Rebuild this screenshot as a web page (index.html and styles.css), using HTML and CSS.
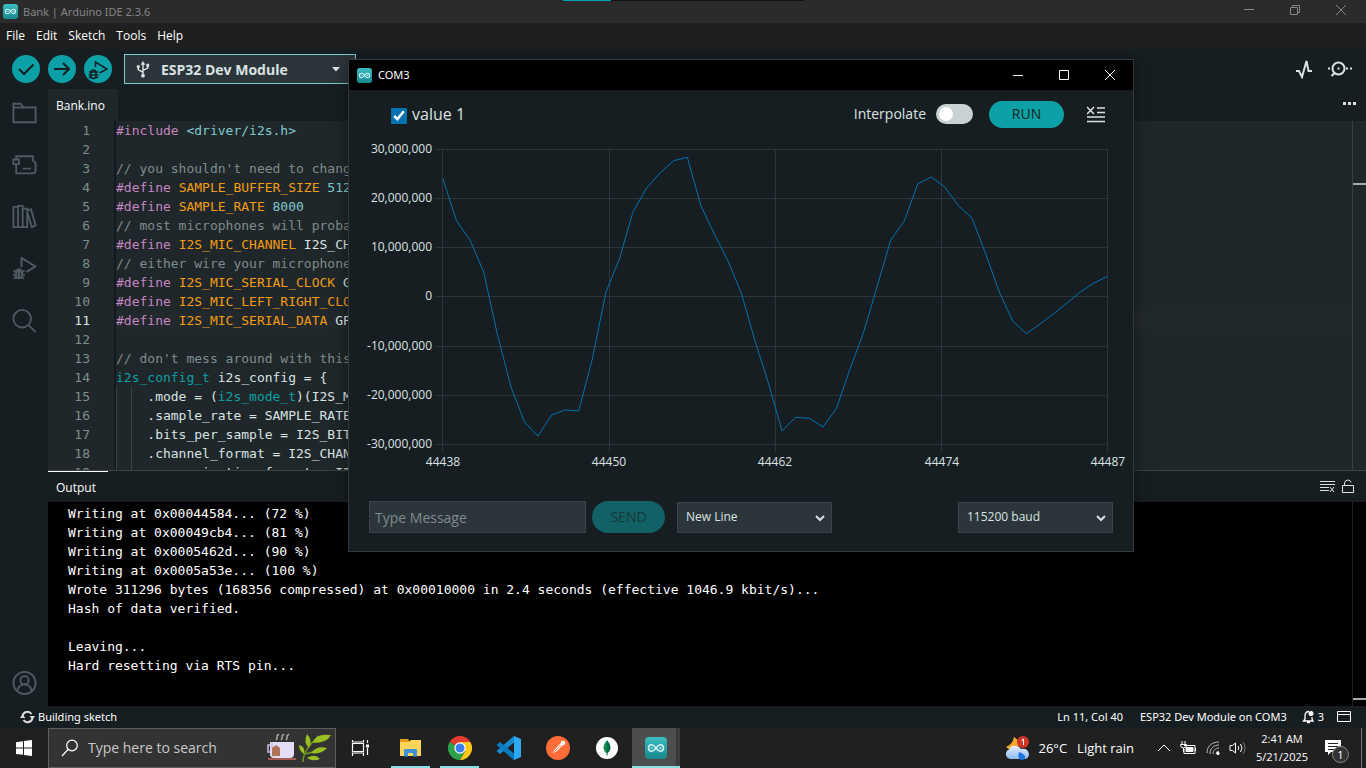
FILE: index.html
```html
<!DOCTYPE html>
<html lang="en">
<head>
<meta charset="utf-8">
<title>Bank | Arduino IDE 2.3.6</title>
<link rel="stylesheet" href="styles.css">
</head>
<body>
<svg class="defs" aria-hidden="true">
  <defs>
    <linearGradient id="teal" x1="0" y1="0" x2="0" y2="1"><stop offset="0" stop-color="#3dbdc0"/><stop offset="1" stop-color="#15898f"/></linearGradient>
    <linearGradient id="cloud" x1="0" y1="0" x2="0" y2="1"><stop offset="0" stop-color="#e8f1ff"/><stop offset="1" stop-color="#8fb9f2"/></linearGradient>
    <symbol id="arduino" viewBox="0 0 22 22">
      <rect width="22" height="22" rx="4" fill="url(#teal)"/>
      <path d="M11 11C9.500 8.800 8.300 7.800 6.700 7.800a3.200 3.200 0 0 0 0 6.400C8.300 14.200 9.500 13.200 11 11s2.700-3.200 4.300-3.200a3.200 3.200 0 0 1 0 6.400C13.700 14.200 12.500 13.200 11 11Z" fill="none" stroke="#d5f3f2" stroke-width="1.500"/>
      <path d="M5.500 11h2.400M14.100 11h2.400M15.300 9.800v2.400" stroke="#d5f3f2" stroke-width=".8"/>
    </symbol>
    <symbol id="bugplay" viewBox="0 0 24 24">
      <path d="M9 10V1l14 8.500-9 5.300" />
      <path d="M3.700 14.500h5.600v4a2.800 2.800 0 0 1-5.600 0ZM4.300 14.500c0-3 4.400-3 4.400 0M6.500 14.500v6M3.700 15.500 1 13.500M3.700 17.700H.5M4 19.500l-2.500 2.300M9.300 15.500l2.700-2M9.300 17.700h3M9 19.500l2.500 2.300"/>
    </symbol>
  </defs>
</svg>
<div class="desktop">
  <header class="titlebar">
    <svg class="app-icon"><use href="#arduino"/></svg>
    <span class="title">Bank | Arduino IDE 2.3.6</span>
    <div class="win-controls">
      <button aria-label="Minimize"><svg width="12" height="12"><path d="M1 5.500h10"/></svg></button>
      <button aria-label="Restore"><svg width="12" height="12"><path d="M1.500 3.500h7v7h-7zM3.500 3V1.500h7v7H9"/></svg></button>
      <button aria-label="Close"><svg width="12" height="12"><path d="m1 1 10 10M11 1 1 11"/></svg></button>
    </div>
    <div class="loading-strip"></div>
  </header>
  <nav class="menubar">
    <a href="#file">File</a><a href="#edit">Edit</a><a href="#sketch">Sketch</a><a href="#tools">Tools</a><a href="#help">Help</a>
  </nav>
  <div class="toolbar">
    <button class="round" aria-label="Verify"><svg viewBox="0 0 28 28"><path d="m7 14 5 5L21.500 9.500"/></svg></button>
    <button class="round" aria-label="Upload"><svg viewBox="0 0 28 28"><path d="M6 14h15M15 8l6 6-6 6"/></svg></button>
    <button class="round debug" aria-label="Debug"><svg viewBox="0 0 28 28"><path d="M11.500 12V7L23 14l-7.500 4"/><path d="M7 17h5v4a2.500 2.500 0 0 1-5 0ZM7.500 17c0-2.700 4-2.700 4 0M5 16.500l2 1.500M4.500 20H7M5 23l2-1.300M14 16.500 12 18M14.500 20H12M14 23l-2-1.300M7 20h5"/></svg></button>
    <div class="board">
      <svg class="usb" viewBox="0 0 16 18"><path d="M8 15V3M8 12 3 9V6.500M8 10l5-2.500V5"/><path class="solid" d="m8 0 2.500 4h-5ZM1.500 4.500h3v3h-3zM11.500 3h3v3h-3z"/><circle class="solid" cx="8" cy="15.500" r="2"/></svg>
      <select aria-label="Board"><option>ESP32 Dev Module</option></select>
      <svg class="caret" viewBox="0 0 10 6"><path d="M0 0h10L5 5.500Z"/></svg>
    </div>
    <div class="tool-right">
      <button aria-label="Serial plotter"><svg width="18" height="20" viewBox="0 0 18 20"><path d="M1 12h3l3 6L11.500 2l2 10H17" stroke-width="2"/></svg></button>
      <button aria-label="Serial monitor"><svg width="26" height="18" viewBox="0 0 26 18"><circle cx="11.500" cy="8.500" r="6" stroke-width="2"/><path d="m7.500 13-3 3" stroke-width="2"/><path d="M1 8.500h2M10.500 8.500h2M19 8.500h2M23 8.500h2" stroke-width="2"/></svg></button>
    </div>
  </div>
  <main class="workspace">
    <aside class="activity">
      <button aria-label="Sketchbook"><svg viewBox="0 0 26 26"><path d="M1 23V3h8l3 4h13v16ZM1 7h11"/></svg></button>
      <button aria-label="Boards manager"><svg viewBox="0 0 26 26"><path d="M4 7V3.500h18V8l3 2.500V19q0 3-3 3H4v-9M1 7h6v5H1ZM11 17h9"/></svg></button>
      <button aria-label="Library manager"><svg viewBox="0 0 26 26"><path d="M1 2h5v22H1ZM6 5V1h5v23H6M11 4h5v20h-5M16 6l4-1.500L25 22l-4 2-5-16"/></svg></button>
      <button aria-label="Debug"><svg viewBox="0 0 24 24"><use href="#bugplay"/></svg></button>
      <button aria-label="Search"><svg viewBox="0 0 26 26"><circle cx="10.500" cy="10.500" r="9.500"/><path d="m17.500 17.500 7.500 7.500"/></svg></button>
      <button class="account" aria-label="Account"><svg viewBox="0 0 26 26"><circle cx="13" cy="13" r="12"/><circle cx="13" cy="10" r="4.500"/><path d="M5 22c1-5 4-7.500 8-7.500s7 2.500 8 7.500"/></svg></button>
    </aside>
    <section class="content">
      <div class="tabs"><button class="tab">Bank.ino</button><button class="more" aria-label="More"><svg width="14" height="4"><path d="M1 1h3v3H1zM6 1h3v3H6zM11 1h3v3h-3z"/></svg></button></div>
      <div class="editor">
        <ol class="code">
          <li><code><b>#include</b> <i>&lt;driver/i2s.h&gt;</i></code></li>
          <li><code></code></li>
          <li><code class="comment">// you shouldn't need to change</code></li>
          <li><code><b>#define</b> <em>SAMPLE_BUFFER_SIZE</em> <i>512</i></code></li>
          <li><code><b>#define</b> <em>SAMPLE_RATE</em> <i>8000</i></code></li>
          <li><code class="comment">// most microphones will probab</code></li>
          <li><code><b>#define</b> <em>I2S_MIC_CHANNEL</em> I2S_CHA</code></li>
          <li><code class="comment">// either wire your microphone</code></li>
          <li><code><b>#define</b> <em>I2S_MIC_SERIAL_CLOCK</em> GP</code></li>
          <li><code><b>#define</b> <em>I2S_MIC_LEFT_RIGHT_CLOC</em></code></li>
          <li class="current"><code><b>#define</b> <em>I2S_MIC_SERIAL_DATA</em> GPI</code></li>
          <li><code></code></li>
          <li><code class="comment">// don't mess around with this</code></li>
          <li><code><u>i2s_config_t</u> i2s_config = {</code></li>
          <li><code class="guides">    .mode = (<u>i2s_mode_t</u>)(I2S_MO</code></li>
          <li><code class="guides">    .sample_rate = SAMPLE_RATE,</code></li>
          <li><code class="guides">    .bits_per_sample = I2S_BITS</code></li>
          <li><code class="guides">    .channel_format = I2S_CHANN</code></li>
          <li><code class="guides">    .communication_format = I2S</code></li>
        </ol>
        <div class="ruler"><span class="mark"></span></div>
      </div>
      <div class="output-head">
        <button class="output-tab">Output</button>
        <div class="output-tools">
          <button aria-label="Clear output"><svg width="16" height="14" viewBox="0 0 16 14"><path d="M0 1.500h15M0 4.500h15M0 7.500h9M0 10.500h9M10 7l4 5M14 7l-4 5"/></svg></button>
          <button aria-label="Toggle scroll lock"><svg width="14" height="15" viewBox="0 0 14 15"><path d="M1.500 6.500h11v7h-11zM3.500 6.500V4q.5-3 3.500-3 2.500 0 3 2.500"/></svg></button>
        </div>
      </div>
      <div class="console">
<pre>Writing at 0x00044584... (72 %)
Writing at 0x00049cb4... (81 %)
Writing at 0x0005462d... (90 %)
Writing at 0x0005a53e... (100 %)
Wrote 311296 bytes (168356 compressed) at 0x00010000 in 2.4 seconds (effective 1046.9 kbit/s)...
Hash of data verified.

Leaving...
Hard resetting via RTS pin...</pre>
        <div class="ruler"><span class="mark"></span></div>
      </div>
    </section>
  </main>
  <footer class="status">
    <svg width="15" height="14" viewBox="0 0 15 14"><path d="M2.500 6a5 5 0 0 1 9-2M12.500 8a5 5 0 0 1-9 2" fill="none" stroke="#ddd" stroke-width="2"/><path d="M9.500 6H15l-2.500 3.500ZM0 8h5.500L2.500 4.500Z" fill="#ddd"/></svg>
    <span>Building sketch</span>
    <span class="cursor">Ln 11, Col 40</span>
    <span class="port">ESP32 Dev Module on COM3</span>
    <button aria-label="Notifications"><svg width="13" height="14" viewBox="0 0 13 14"><path d="M7 1.500Q3 1.500 3 6v3l-1.500 2H11L10 9V7M5 12.500h3" fill="none" stroke="#fff" stroke-width="1.300"/><circle cx="9" cy="3.500" r="2.500" fill="#fff"/></svg><span>3</span></button>
    <button class="panel" aria-label="Toggle panel"><svg width="14" height="12"><path d="M.5.500h13v10H.5zM1 3.500h12" fill="none" stroke="#fff"/></svg></button>
  </footer>
  <div class="taskbar">
    <button class="start" aria-label="Start"><svg width="16" height="16" viewBox="0 0 16 16"><path d="M0 2.200 7 1.300v6.300H0ZM8 1.100 16 0v7.600H8ZM0 8.500h7v6.300L0 13.900ZM8 8.500h8V16l-8-1.100Z" fill="#fff"/></svg></button>
    <label class="search">
      <svg width="18" height="18" viewBox="0 0 18 18"><circle cx="11" cy="6.500" r="5.300"/><path d="M7 10.500 1 17"/></svg>
      <input type="text" placeholder="Type here to search" aria-label="Search">
      <svg class="tea" width="64" height="32" viewBox="0 0 64 32"><path d="M9 8q2-2 1-4l2-2M14 8q2-2 1-4l2-2M19 8q2-2 1-4l2-2" stroke="#aaa" stroke-width="1.500"/><path d="M3 10h24v12q0 4-4 4H7q-4 0-4-4Z" fill="#e3dcf4" stroke="none"/><path d="M3 13H1v7h2M5 10v7" stroke="#cbbde6" stroke-width="1.500"/><path d="m5 16 4-3 4 3v8H5Z" fill="#b07355" stroke="none"/><path d="M1 26h28v2H1Z" fill="#a65c55" stroke="none"/><path d="M36 30q0-12 16-26M37 22q8-1 18-6" stroke="#70961c" stroke-width="1.500"/><path d="M42 16q-6-5-2-14 6 6 2 14ZM46 11q2-10 18-8-4 8-18 8ZM44 21q6-8 16-5-6 7-16 5ZM37 22q-5-3-5-9 7 2 5 9ZM40 26q8-5 13 1-7 3-13-1Z" fill="#9abf22" stroke="none"/></svg>
    </label>
    <div class="apps">
      <button class="task-view" aria-label="Task view"><svg width="18" height="18" viewBox="0 0 18 18"><path d="M1.500 4.500h11v8h-11zM1.500 1v2h11V1M1.500 17v-3h11v3M16.500 1v3M16.500 9v7" fill="none" stroke="#fff" stroke-width="1.200"/><path d="M15 5.500h3v3h-3z" fill="#fff"/></svg></button>
      <button class="running" aria-label="File Explorer"><svg width="22" height="20" viewBox="0 0 22 20"><path d="M0 1h8l2 3H0Z" fill="#e59b12"/><path d="M0 4h9l2-2h10v16H0Z" fill="#ffd45a"/><path d="M4 18.500V12q0-1 1-1h11q1 0 1 1v6.500h-4V15H8v3.500Z" fill="#3b93d9"/></svg></button>
      <button class="running" aria-label="Chrome"><svg width="24" height="24" viewBox="0 0 24 24"><path d="M12 12 1.600 6A12 12 0 0 1 22.400 6Z" fill="#e33b2e"/><path d="M12 12 1.600 6A12 12 0 0 0 12 24l5.200-9Z" fill="#2b9f4a"/><path d="M12 12 17.200 15 12 24A12 12 0 0 0 22.400 6H12Z" fill="#fbc618"/><circle cx="12" cy="12" r="5.700" fill="#fff"/><circle cx="12" cy="12" r="4.500" fill="#3b7ded"/></svg></button>
      <button aria-label="Visual Studio Code"><svg width="24" height="24" viewBox="0 0 24 24"><path d="m17 0 7 3v18l-7 3Z" fill="#2da9f2"/><path d="M17 0v6.500L3 18l-3-2.500v-1Z" fill="#168bd2"/><path d="M17 24v-6.500L3 6 0 8.500v1Z" fill="#087bc1"/></svg></button>
      <button aria-label="Postman"><svg width="24" height="24" viewBox="0 0 24 24"><circle cx="12" cy="12" r="12" fill="#ff6c37"/><path d="m6 18 3-5 6-6 2 2-6 6Z" fill="#fff"/><circle cx="17" cy="7" r="2.300" fill="#fff"/><path d="m6 18 9-9" stroke="#ff6c37" stroke-width=".8"/></svg></button>
      <button aria-label="MongoDB Compass"><svg width="24" height="24" viewBox="0 0 24 24"><circle cx="12" cy="12" r="11" fill="#fff"/><path d="M12 4q-7 8 0 14Z" fill="#118d4d"/><path d="M12 4q7 8 0 14Z" fill="#00684a"/><path d="M12 17v3" stroke="#547c68"/></svg></button>
      <button class="running active" aria-label="Arduino IDE"><svg width="22" height="22"><use href="#arduino"/></svg></button>
    </div>
    <div class="tray">
      <button class="weather"><svg width="25" height="25" viewBox="0 0 25 25"><path d="M9 1q-1 7-8 10 5 5 11 1 5-6-3-11Z" fill="#f5a928"/><path d="M5 23a5 5 0 0 1-1-9.500q2-5 8-3.500 3 1 4 3 7-1 8 5 0 5-5 5Z" fill="url(#cloud)"/><path d="M14 16q-2 6 2 8 5 0 4-4-1-2-6-4Z" fill="#1b75de"/><circle cx="18" cy="6" r="6" fill="#d13526"/><path d="m16.500 4.500 2-1.500v6" stroke="#fff" fill="none"/></svg><span>26°C</span><span>Light rain</span></button>
      <button aria-label="Hidden icons"><svg width="14" height="8"><path d="m1 7 6-6 6 6"/></svg></button>
      <button aria-label="Battery"><svg width="17" height="14" viewBox="0 0 17 14"><path d="M4 4.500h11v8H4V8M15.500 7v3M2 0v3M5 0v3M.5 3.500h6q0 3.500-3 3.500t-3-3.500M3.500 7v4"/><path d="M6 6.500h7v4H6z" fill="#fff"/></svg></button>
      <button aria-label="Wi-Fi"><svg width="14" height="14" viewBox="0 0 14 14"><path d="M1 12C1 5 6 1 13 1M4 13c0-6 4-9 9-9M7 13c0-3.500 2.500-6 6-6M10 13q0-3 3-3" stroke="#bbb"/><circle cx="12" cy="12.500" r="1.200" fill="#fff"/></svg></button>
      <button aria-label="Volume"><svg width="17" height="14" viewBox="0 0 17 14"><path d="M1 4.500h2.500L6.500 2v10l-3-2.500H1ZM9 5q1.500 2 0 4M11.500 3q3 4 0 8"/><path d="M14 1q4 6 0 12" stroke="#777"/></svg></button>
      <div class="clock"><time>2:41 AM</time><time>5/21/2025</time></div>
      <button class="notice" aria-label="Notifications"><svg width="16" height="18" viewBox="0 0 16 18"><path d="M0 1h16v12H6l-3 3v-3H0Z" fill="#fff" stroke="none"/><path d="M3 4.500h10M3 7.500h10M3 10.500h6" stroke="#222"/></svg><span class="badge">1</span></button>
    </div>
  </div>

  <section class="plotter" aria-label="COM3">
    <header class="plot-title">
      <svg class="app-icon"><use href="#arduino"/></svg><span>COM3</span>
      <div class="win-controls">
        <button aria-label="Minimize"><svg width="12" height="12"><path d="M1 6.500h10"/></svg></button>
        <button aria-label="Maximize"><svg width="12" height="12"><path d="M1.500 1.500h9v9h-9z"/></svg></button>
        <button aria-label="Close"><svg width="12" height="12"><path d="m1 1 10 10M11 1 1 11"/></svg></button>
      </div>
    </header>
    <div class="plot-head">
      <label class="series"><input type="checkbox" checked>value 1</label>
      <label class="interp">Interpolate<input type="checkbox" class="switch"></label>
      <button class="run">RUN</button>
      <button class="clear" aria-label="Clear plot"><svg width="18" height="17" viewBox="0 0 18 17"><path d="m0 1 7 7M7 1 0 8M10 2h8M10 6.500h8M0 11h18M0 15.500h18"/></svg></button>
    </div>
    <svg class="chart" viewBox="349 138 784 340" role="img" aria-label="value 1">
      <path class="grid" d="M435 149.500h673M435 198.500h673M435 247.500h673M435 296.500h673M435 346.500h673M435 395.500h673M435 444.500h673M442.500 149v303M609.500 149v303M775.500 149v303M941.500 149v303M1107.500 149v303"/>
      <g class="ylabels"><text x="432" y="153">30,000,000</text><text x="432" y="202">20,000,000</text><text x="432" y="251">10,000,000</text><text x="432" y="300">0</text><text x="432" y="350">-10,000,000</text><text x="432" y="399">-20,000,000</text><text x="432" y="448">-30,000,000</text></g>
      <g class="xlabels"><text x="443" y="466">44438</text><text x="609" y="466">44450</text><text x="775" y="466">44462</text><text x="942" y="466">44474</text><text x="1108" y="466">44487</text></g>
      <polyline class="trace" points="443,179 456.600,221 470,240 483.700,272 497.300,334 511,387 524.400,422 538,436 551.600,415 565,410 578.700,411 592.300,359 606,292 619.400,259 633,212 646.600,188 660,173 673.700,160.700 687.300,157.300 701,206 714.400,234 728,261 741.600,294 755,341 768.700,384 782,431 795.600,417.300 809.300,418.300 823,427 836.600,408 850,369 863.700,332 877.300,286 890.700,240 904.300,221 917.700,184 931.300,177 944.700,187 958.700,206 972,218 985.700,254 999.300,292 1012.700,321 1026.300,333.700 1040,324 1053.300,314 1067,303 1080.300,292 1094,283 1107.500,276.300"/>
    </svg>
    <form class="plot-foot">
      <input type="text" placeholder="Type Message" aria-label="Message">
      <button type="button" class="send" disabled>SEND</button>
      <span class="pick"><select aria-label="Line ending"><option>New Line</option></select><svg width="10" height="7"><path d="m1 1 4 4 4-4"/></svg></span>
      <span class="pick baud"><select aria-label="Baud rate"><option>115200 baud</option></select><svg width="10" height="7"><path d="m1 1 4 4 4-4"/></svg></span>
    </form>
  </section>
</div>
</body>
</html>
```
FILE: styles.css
```css
* { box-sizing: border-box; }
body { margin: 0; background: #000; color: #fff; font: 12px/16px "Open Sans", "Noto Sans", sans-serif; }
button { background: none; border: 0; padding: 0; color: inherit; font: inherit; display: flex; align-items: center; justify-content: center; }
a { color: inherit; text-decoration: none; }
svg { display: block; flex: none; }
.defs { position: absolute; width: 0; height: 0; }
.desktop { position: relative; display: flex; flex-direction: column; height: 100vh; overflow: hidden; }
.app-icon { width: 15px; height: 15px; }

.titlebar { position: relative; flex: none; display: flex; align-items: center; gap: 5px; height: 23px; padding-left: 3px; background: #2b2b2b; color: #858585; font-family: "Noto Sans", sans-serif; font-size: 11px; }
.win-controls { display: flex; align-self: stretch; margin-left: auto; }
.win-controls button { width: 46px; }
.win-controls svg { fill: none; stroke: currentColor; }
.titlebar .win-controls { padding: 0 2px 3px 0; }
.loading-strip { position: absolute; top: 0; left: 563px; width: 241px; height: 1px; background: linear-gradient(90deg, #00a6b8 48px, #111 48px); }

.menubar { flex: none; display: flex; align-items: center; gap: 11px; height: 26px; padding-left: 6px; background: #1f1f1f; }

.toolbar { flex: none; display: flex; align-items: center; gap: 8px; height: 40px; padding: 0 13px 0 12px; background: #171e21; }
.round { width: 28px; height: 28px; border-radius: 50%; background: #0ca1a6; }
.round svg { width: 28px; height: 28px; fill: none; stroke: #171e21; stroke-width: 2; }
.round.debug svg { stroke-width: 1.500; }
.board { display: flex; align-items: center; width: 232px; height: 30px; margin-left: 4px; padding: 0 15px 0 10px; border: 1px solid #7fcbcd; background: #2c353a; }
.board select { flex: 1; margin-left: 10px; padding: 2px 0 0; border: 0; appearance: none; background: none; color: #dae3e3; font: bold 14px/20px "Open Sans", sans-serif; }
.usb { width: 16px; height: 17px; fill: none; stroke: #dae3e3; stroke-width: 1.500; }
.usb .solid { fill: #dae3e3; stroke: none; }
.caret { width: 8px; height: 5px; fill: #dae3e3; }
.tool-right { display: flex; gap: 14px; margin-left: auto; }
.tool-right svg { fill: none; stroke: #dae3e3; }

.workspace { flex: 1; display: flex; min-height: 0; background: #171e21; }
.activity { flex: none; display: flex; flex-direction: column; align-items: center; gap: 28px; width: 48px; padding: 12px 0 11px; }
.activity svg { width: 25px; height: 24px; fill: none; stroke: #4e5b61; stroke-width: 2; }
.account { margin-top: auto; }
.content { flex: 1; display: flex; flex-direction: column; min-width: 0; }
.tabs { flex: none; display: flex; justify-content: space-between; height: 32px; }
.tab { padding: 2px 13px 0 8px; background: #1f272a; }
.more { padding: 0 10px 4px 0; }
.more path { fill: #dae3e3; }
.editor { flex: 1; display: flex; min-height: 0; overflow: hidden; background: #1f272a; }
.code { flex: 1; min-width: 0; margin: 0; padding: 0; list-style: none; counter-reset: line; background: linear-gradient(#13191c, #13191c) 66px 0 / 2px 100% no-repeat; }
.code li { display: flex; height: 19px; font: 13px/19px "DejaVu Sans Mono", "Liberation Mono", monospace; color: #7f8c8d; counter-increment: line; }
.code li::before { content: counter(line); width: 42px; margin-right: 26px; text-align: right; }
.code .current { color: #dae3e3; }
.code code { flex: 1; font: inherit; color: #dae3e3; white-space: pre; }
.code .current code { background: #22292c; }
.code b { color: #c586c0; font-weight: normal; }
.code i { color: #7fcbcd; font-style: normal; }
.code em { color: #f39c12; font-style: normal; }
.code u { color: #0ca1a6; text-decoration: none; }
.code code.comment { color: #7f8c8d; }
.code .guides { background: linear-gradient(#3b4346, #3b4346) 0 0 / 1px 100% no-repeat, linear-gradient(#3b4346, #3b4346) 15px 0 / 1px 100% no-repeat; }
.ruler { flex: none; display: flex; flex-direction: column; width: 14px; border-left: 1px solid #3a4144; }
.mark { height: 2px; margin-top: 62px; background: #a5aaac; }

.output-head { flex: none; display: flex; justify-content: space-between; height: 32px; padding-right: 11px; border-top: 1px solid #3a4144; }
.output-tab { padding: 3px 12px 0 8px; box-shadow: inset 0 1px #fff; }
.output-tools { display: flex; gap: 5px; }
.output-tools svg { fill: none; stroke: #dae3e3; }
.console { flex: none; display: flex; justify-content: space-between; height: 204px; background: #000; }
.console pre { margin: 0; padding: 2px 0 0 20px; font: 13px/19px "DejaVu Sans Mono", "Liberation Mono", monospace; }
.console .ruler { border-color: #222; }
.console .mark { margin-top: 196px; }

.status { flex: none; display: flex; align-items: center; height: 22px; padding: 0 15px 0 20px; gap: 3px; background: #171e21; font-family: "Noto Sans", sans-serif; font-size: 11px; }
.status .cursor { margin-left: auto; }
.status .port { margin: 0 12px 0 14px; }
.status button { gap: 3px; }
.status .panel { margin-left: 10px; }

.taskbar { flex: none; display: flex; height: 40px; background: #202020; }
.start { width: 48px; }
.search { display: flex; align-items: center; width: 288px; padding: 0 4px 0 12px; border: 1px solid #5e5e5e; background: #333; }
.search svg { fill: none; stroke: #fff; stroke-width: 1.200; }
.search input { flex: 1; min-width: 0; margin: 0 0 0 9px; padding: 0; border: 0; background: none; color: #fff; font: 14px/20px "Open Sans", sans-serif; }
.search input::placeholder { color: #c8c8c8; opacity: 1; }
.apps { display: flex; }
.apps button { width: 49px; border: solid transparent; border-width: 0 5px; }
.apps .task-view { width: 50px; padding-right: 2px; }
.apps .running { background: linear-gradient(#86e0e6, #86e0e6) 0 100% / 100% 2px no-repeat padding-box; }
.apps .active { width: 48px; margin-left: 1px; border: 0; background: linear-gradient(#86e0e6, #86e0e6) 0 100% / 100% 2px no-repeat, linear-gradient(90deg, #4b4d4e 44px, #292929 44px, #3c3c3c 45px); }
.tray { display: flex; align-items: center; margin-left: auto; padding-right: 4px; gap: 9px; }
.tray svg { fill: none; stroke: #fff; }
.weather svg { stroke: none; }
.weather { gap: 8px; margin-right: 14px; font-size: 13px; }
.weather span + span { margin-left: 2px; }
.clock { display: flex; flex-direction: column; align-items: center; gap: 2px; width: 54px; margin-right: 6px; font-size: 11px; }
.notice { position: relative; align-self: stretch; justify-content: flex-start; width: 38px; border-right: 1px solid #777; padding-left: 1px; }
.badge { position: absolute; left: 8px; top: 18px; width: 17px; height: 17px; border: 1px solid #888; border-radius: 50%; background: #333; font-size: 11px; line-height: 15px; }

.plotter { position: absolute; left: 348px; top: 59px; width: 786px; border: 1px solid #343839; background: #171e21; box-shadow: 0 2px 16px rgba(0, 0, 0, .4); color: #dae3e3; }
.plot-title { display: flex; align-items: center; gap: 6px; height: 30px; padding-left: 8px; background: #000; color: #fff; font-family: "Noto Sans", sans-serif; font-size: 11px; }
.plot-head { display: flex; align-items: center; height: 48px; padding: 0 28px 0 42px; }
.series { display: flex; align-items: center; gap: 5px; margin-right: auto; font-size: 16px; }
.series input { width: 16px; height: 16px; margin: 4px 0 0; accent-color: #0072b2; }
.interp { display: flex; align-items: center; gap: 10px; margin-right: 16px; font-size: 14px; }
.switch { appearance: none; width: 37px; height: 20px; margin: 0; padding: 3px; border-radius: 10px; background: #c9d2d2; }
.switch::before { content: ""; display: block; width: 14px; height: 14px; border-radius: 50%; background: #fff; }
.run { width: 75px; height: 27px; border-radius: 14px; background: #0ca1a6; color: #171e21; font-size: 14px; }
.clear { margin-left: 23px; }
.clear svg { fill: none; stroke: #dae3e3; stroke-width: 1.500; }
.chart { width: 100%; height: auto; }
.grid { fill: none; stroke: #2c353a; }
.ylabels, .xlabels { fill: #dae3e3; font-size: 12px; }
.ylabels { text-anchor: end; }
.xlabels { text-anchor: middle; }
.trace { fill: none; stroke: #0072b2; stroke-width: 1; }
.plot-foot { display: flex; align-items: center; padding: 23px 20px 18px; }
.plot-foot input { width: 217px; height: 32px; margin: 0; padding: 0 5px; border: 1px solid #3a4448; background: #2c353a; color: #dae3e3; font: 14px/20px "Open Sans", sans-serif; }
.plot-foot input::placeholder { color: #7f8c8d; opacity: 1; }
.send { width: 73px; height: 32px; margin: 0 12px 0 6px; border-radius: 16px; background: #116166; color: #17383c; font-size: 14px; }
.pick { position: relative; display: flex; width: 155px; height: 31px; }
.pick select { width: 100%; padding: 0 8px; border: 1px solid #3a4448; border-radius: 0; appearance: none; background: #2c353a; color: #dae3e3; font: 12px/16px "Open Sans", sans-serif; }
.pick svg { position: absolute; right: 7px; top: 13px; fill: none; stroke: #dae3e3; stroke-width: 2; pointer-events: none; }
.baud { margin-left: auto; }
```
